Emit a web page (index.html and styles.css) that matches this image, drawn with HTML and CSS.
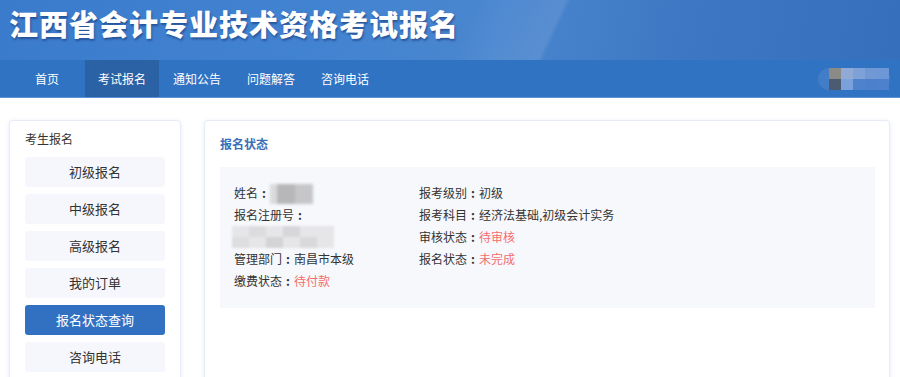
FILE: index.html
```html
<!DOCTYPE html>
<html lang="zh">
<head>
<meta charset="utf-8">
<title>江西省会计专业技术资格考试报名</title>
<link rel="stylesheet" href="styles.css">
</head>
<body>
<header class="banner">
  <div class="shine"></div>
  <h1 class="title">江西省会计专业技术资格考试报名</h1>
</header>
<nav class="nav">
  <ul class="nav-list">
    <li class="nav-item first">首页</li>
    <li class="nav-item active">考试报名</li>
    <li class="nav-item">通知公告</li>
    <li class="nav-item">问题解答</li>
    <li class="nav-item">咨询电话</li>
  </ul>
  <div class="user">
    <div class="user-halo"></div>
    <div class="pix p1"></div><div class="pix p2"></div><div class="pix p3"></div><div class="pix p4"></div><div class="pix p5"></div>
    <div class="pix q1"></div><div class="pix q2"></div><div class="pix q3"></div><div class="pix q4"></div><div class="pix q5"></div>
  </div>
</nav>
<main class="main">
  <aside class="side">
    <div class="side-title">考生报名</div>
    <ul class="menu">
      <li class="menu-item">初级报名</li>
      <li class="menu-item">中级报名</li>
      <li class="menu-item">高级报名</li>
      <li class="menu-item">我的订单</li>
      <li class="menu-item active">报名状态查询</li>
      <li class="menu-item">咨询电话</li>
    </ul>
  </aside>
  <section class="content">
    <h2 class="content-title">报名状态</h2>
    <div class="info">
      <div class="col">
        <div class="row">姓名<span class="c">:</span><span class="blur-name"><i></i><i></i><i></i></span></div>
        <div class="row">报名注册号<span class="c">:</span></div>
        <div class="row"><span class="blur-num"><i></i><i></i><i></i><i></i><i></i><i></i><i></i><i></i><i></i><i></i><i></i><i></i></span></div>
        <div class="row">管理部门<span class="c">:</span>南昌市本级</div>
        <div class="row">缴费状态<span class="c">:</span><span class="red">待付款</span></div>
      </div>
      <div class="col">
        <div class="row">报考级别<span class="c">:</span>初级</div>
        <div class="row">报考科目<span class="c">:</span>经济法基础,初级会计实务</div>
        <div class="row">审核状态<span class="c">:</span><span class="red">待审核</span></div>
        <div class="row">报名状态<span class="c">:</span><span class="red">未完成</span></div>
      </div>
    </div>
  </section>
</main>
</body>
</html>
```
FILE: styles.css
```css
* { box-sizing: border-box; }
html, body { margin: 0; padding: 0; }
body {
  font-family: "Noto Sans CJK SC", "Microsoft YaHei", sans-serif;
  font-size: 12px;
  color: #333;
  background: #fff;
  width: 900px;
  height: 377px;
  overflow: hidden;
}
ul { list-style: none; margin: 0; padding: 0; }

.banner {
  position: relative;
  height: 60px;
  background: linear-gradient(100deg, #3b7bcc 0%, #4283d1 35%, #4a86cf 55%, #3e78c4 75%, #3670bd 100%);
  overflow: hidden;
}
.shine {
  position: absolute;
  left: 380px;
  top: -40px;
  width: 240px;
  height: 110px;
  background: linear-gradient(115deg, rgba(255,255,255,0) 40%, rgba(255,255,255,0.10) 70%, rgba(255,255,255,0) 72%);
}
.title {
  position: relative;
  margin: 0;
  padding: 4px 0 0 9px;
  font-size: 29px;
  line-height: 38px;
  font-weight: 900;
  color: #fff;
  letter-spacing: 1px;
  text-shadow: 1px 2px 2px rgba(20,50,110,0.55);
}

.nav {
  position: relative;
  height: 38px;
  background: #3073c3;
  border-bottom: 1px solid #5b93d6;
  display: flex;
  align-items: stretch;
}
.nav-list {
  display: flex;
  padding-left: 22px;
}
.nav-item {
  padding: 0 13px;
  line-height: 37px;
  font-size: 12px;
  color: #fff;
}
.nav-item.first { margin-right: 13px; }
.nav-item.active { background: #2b62a6; padding: 0 13px; }
.nav-item.active + .nav-item { padding-left: 14px; }

.user {
  position: absolute;
  left: 818px;
  top: 8px;
  width: 72px;
  height: 22px;
}
.user-halo {
  position: absolute;
  left: 0; top: 0;
  width: 72px; height: 22px;
  border-radius: 11px;
  background: rgba(110,150,210,0.3);
}
.pix { position: absolute; width: 12px; height: 11px; }
.p1 { left: 11px; top: 0; background: #8c8a87; }
.p2 { left: 23px; top: 0; background: #8faad5; }
.p3 { left: 35px; top: 0; background: #7ea2d7; }
.p4 { left: 47px; top: 0; background: #6f98d5; }
.p5 { left: 59px; top: 0; background: #6d97d6; }
.q1 { left: 11px; top: 11px; background: #4d5b72; }
.q2 { left: 23px; top: 11px; background: #7ba1db; }
.q3 { left: 35px; top: 11px; background: #4f82cd; }
.q4 { left: 47px; top: 11px; background: #4c80cc; }
.q5 { left: 59px; top: 11px; background: #4d81cd; }

.main {
  display: flex;
  align-items: flex-start;
  gap: 23px;
  padding: 22px 10px 0 9px;
}
.side {
  width: 172px;
  height: 270px;
  background: #fff;
  border: 1px solid #e6ebf7;
  border-radius: 4px;
  box-shadow: 0 1px 4px rgba(180,195,230,0.35);
  padding: 9px 15px 0 15px;
}
.side-title {
  font-size: 12px;
  line-height: 18px;
  color: #333;
  margin-bottom: 9px;
}
.menu { display: flex; flex-direction: column; gap: 7px; }
.menu-item {
  height: 30px;
  line-height: 30px;
  text-align: center;
  font-size: 13px;
  background: #f6f7fc;
  border-radius: 3px;
  color: #333;
}
.menu-item.active { background: #3271c2; color: #fff; }

.content {
  flex: 1;
  height: 270px;
  background: #fff;
  border: 1px solid #e6ebf7;
  border-radius: 4px;
  box-shadow: 0 1px 4px rgba(180,195,230,0.35);
  padding: 13px 14px 0 15px;
}
.content-title {
  margin: 0 0 13px 0;
  font-size: 12px;
  line-height: 20px;
  font-weight: bold;
  color: #3b6fb6;
}
.info {
  display: grid;
  grid-template-columns: 185px 1fr;
  background: #f7f8fc;
  padding: 15px 14px 16px 14px;
  height: 141px;
}
.row {
  height: 22px;
  line-height: 22px;
  font-size: 12px;
  color: #333;
  white-space: nowrap;
}
.c {
  display: inline-block;
  width: 12px;
  text-align: center;
  font-weight: bold;
}
.red { color: #f56c6c; }

.blur-name {
  display: inline-flex;
  vertical-align: middle;
  height: 20px;
  margin-top: -2px;
  filter: blur(1.5px);
}
.blur-name i { display: block; width: 18px; height: 20px; }
.blur-name i:nth-child(1) { background: #dadada; width: 7px; }
.blur-name i:nth-child(2) { background: #b7b7b9; }
.blur-name i:nth-child(3) { background: #c6c6c8; }

.blur-num {
  display: inline-grid;
  grid-template-columns: repeat(6, 17px);
  vertical-align: top;
  margin-left: -2px;
  filter: blur(1px);
}
.blur-num i { display: block; height: 11px; background: #e6e6e8; }
.blur-num i:nth-child(2) { background: #dcdcde; }
.blur-num i:nth-child(4) { background: #d7d7da; }
.blur-num i:nth-child(7) { background: #dedee0; }
.blur-num i:nth-child(9) { background: #d4d4d7; }
.blur-num i:nth-child(11) { background: #d9d9dc; }
```
